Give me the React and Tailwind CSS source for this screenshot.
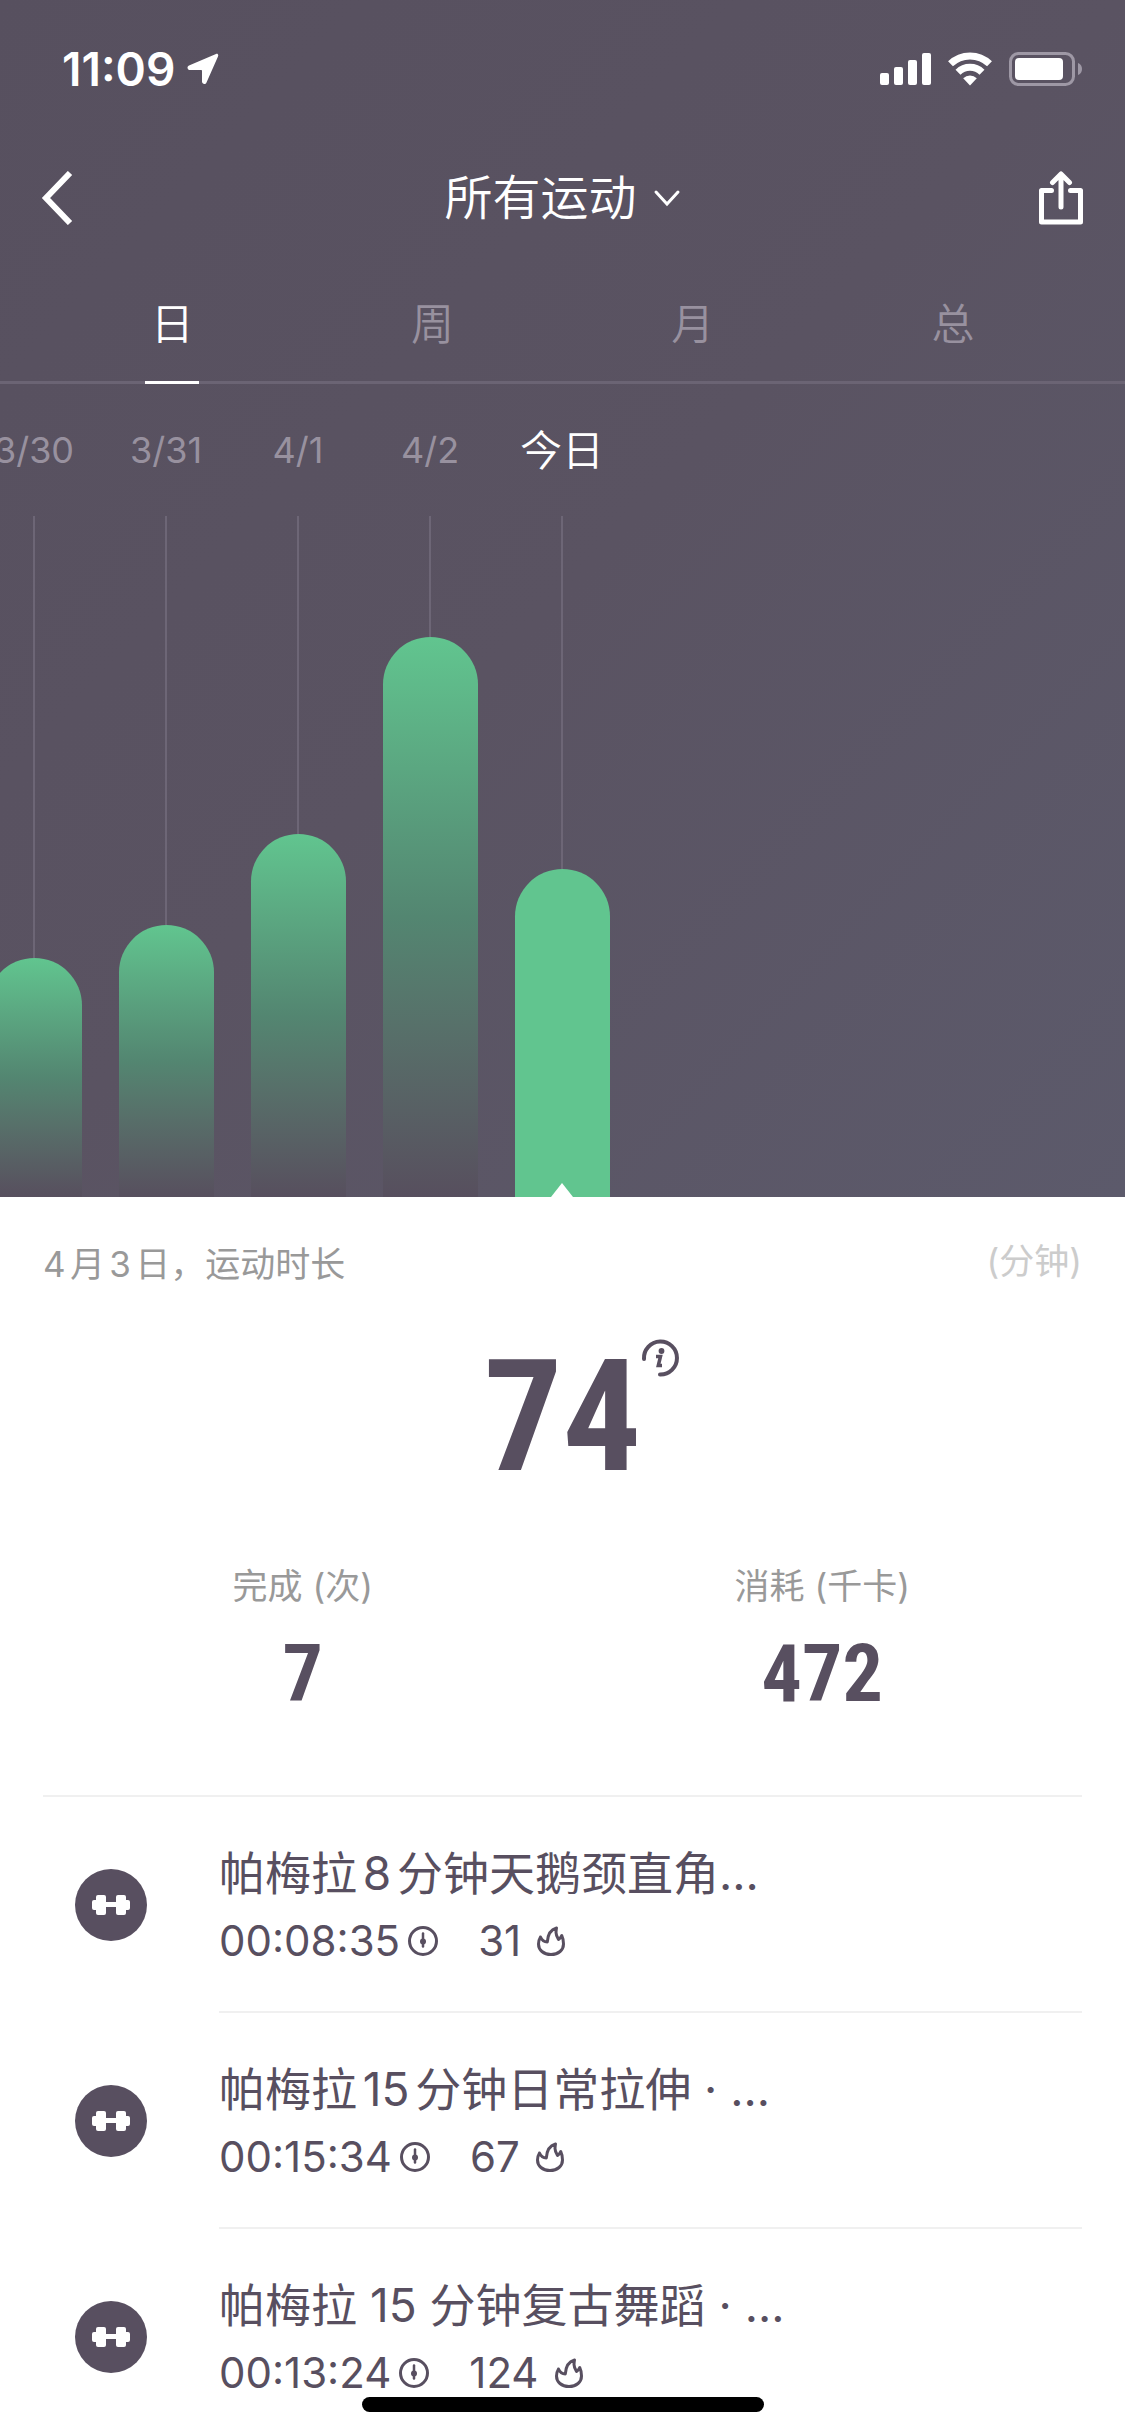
import React, { useState } from "react";

const TABS = ["日", "周", "月", "总"];

const DAYS = [
  { label: "3/30", height: 239 },
  { label: "3/31", height: 272 },
  { label: "4/1", height: 363 },
  { label: "4/2", height: 560 },
  { label: "今日", height: 328, today: true },
];

const WORKOUTS = [
  { id: 1, title: "帕梅拉8分钟天鹅颈直角…", time: "00:08:35", kcal: 31 },
  { id: 2, title: "帕梅拉15分钟日常拉伸 · …", time: "00:15:34", kcal: 67 },
  { id: 3, title: "帕梅拉 15 分钟复古舞蹈 · …", time: "00:13:24", kcal: 124 },
];

const LocationIcon = () => (
  <svg width="32" height="32" viewBox="0 0 32 32" fill="currentColor">
    <path d="M29 1 2 12.500c-2.400 1-1.800 4.500 1 4.500H14c.6 0 1 .4 1 1v10.500c0 2.800 3.500 3.400 4.500 1L31 3.500C31.800 1.500 30.500.3 29 1z" />
  </svg>
);

const SignalIcon = () => (
  <svg width="51" height="34" viewBox="0 0 51 34" fill="currentColor">
    <rect x="0" y="21" width="9" height="12" rx="2" />
    <rect x="14" y="15" width="9" height="18" rx="2" />
    <rect x="28" y="8" width="9" height="25" rx="2" />
    <rect x="42" y="1" width="9" height="32" rx="2" />
  </svg>
);

const WifiIcon = () => (
  <svg width="46" height="34" viewBox="0 0 46 34" fill="none" stroke="currentColor">
    <path d="M3.500 11.800a28 28 0 0 1 39 0" strokeWidth="7" />
    <path d="M11 20.200a17 17 0 0 1 24 0" strokeWidth="7" />
    <path d="M23 33.500 16.200 26.200a10 10 0 0 1 13.600 0z" fill="currentColor" stroke="none" />
  </svg>
);

const BatteryIcon = () => (
  <svg width="74" height="34" viewBox="0 0 74 34">
    <rect x="1.500" y="1.500" width="63" height="31" rx="8" fill="none" stroke="#9e98a5" strokeWidth="3" />
    <rect x="6" y="6" width="48" height="22" rx="4" fill="currentColor" />
    <path d="M69 11c3 1 4 3.500 4 6s-1 5-4 6z" fill="#9e98a5" />
  </svg>
);

const BackIcon = () => (
  <svg width="32" height="54" viewBox="0 0 32 54" fill="none" stroke="currentColor" strokeWidth="6">
    <path d="M29 2 5 27l24 25" />
  </svg>
);

const ChevronDownIcon = () => (
  <svg width="28" height="18" viewBox="0 0 28 18" fill="none" stroke="currentColor" strokeWidth="3" strokeLinecap="round">
    <path d="m3 3 11 12L25 3" />
  </svg>
);

const ShareIcon = () => (
  <svg
    width="46"
    height="54"
    viewBox="0 0 46 54"
    fill="none"
    stroke="currentColor"
    strokeWidth="5"
    strokeLinecap="round"
    strokeLinejoin="round"
  >
    <path d="M13.500 19.500H3.500V51h39V19.500h-10" />
    <path d="M23 36V4M14.500 11.500 23 3l8.500 8.500" />
  </svg>
);

const InfoIcon = () => (
  <svg width="38" height="38" viewBox="0 0 38 38" fill="none" stroke="currentColor">
    <path d="M3 20A16.500 16.500 0 1 1 19 35.500" strokeWidth="4" strokeLinecap="round" />
    <circle cx="20.500" cy="12" r="2.900" fill="currentColor" stroke="none" />
    <path d="M15 17.500h4.500L17.300 26.500h3.700" strokeWidth="3.500" />
  </svg>
);

const DumbbellIcon = () => (
  <svg width="38" height="20" viewBox="0 0 38 20" fill="currentColor">
    <rect x="0" y="5" width="8" height="10" rx="2" />
    <rect x="30" y="5" width="8" height="10" rx="2" />
    <rect x="12" y="7" width="14" height="5" />
    <rect x="4" y="0" width="10" height="20" rx="2" />
    <rect x="24" y="0" width="10" height="20" rx="2" />
  </svg>
);

const TimerIcon = () => (
  <svg width="30" height="30" viewBox="0 0 30 30" fill="none" stroke="currentColor">
    <circle cx="15" cy="15" r="13.500" strokeWidth="3" />
    <path d="M15 7.500v13" strokeWidth="2.500" strokeLinecap="round" />
    <circle cx="15" cy="15.500" r="3" fill="currentColor" stroke="none" />
  </svg>
);

const FlameIcon = () => (
  <svg
    width="28"
    height="30"
    viewBox="0 0 28 30"
    fill="none"
    stroke="currentColor"
    strokeWidth="3"
    strokeLinejoin="round"
    strokeLinecap="round"
  >
    <path d="M3.500 11C2.300 13 1.500 15.500 1.500 18 1.500 24 6.500 28.500 14 28.500S26.500 24 26.500 18c0-3-.6-6-1.800-8.500-.8 1.800-1.700 3-3.200 4-1.500-2.500-2.500-4.500-2.500-7 0-1.700.2-3 .5-4.500C14 3.500 10.800 8 10.300 16 7 16 5 14.500 3.500 11z" />
  </svg>
);

const StatusBar = () => (
  <div className="flex h-[138px] items-center justify-between pr-[42px] pl-[62px]">
    <div className="flex items-center gap-3">
      <span className="text-[46px] leading-none font-semibold">11:09</span>
      <LocationIcon />
    </div>
    <div className="flex items-center gap-4">
      <SignalIcon />
      <WifiIcon />
      <BatteryIcon />
    </div>
  </div>
);

const DayColumn = ({ day }) => (
  <button type="button" className="flex w-[132px] shrink-0 flex-col items-center">
    <span
      className={
        day.today
          ? "flex h-[132px] items-center text-[42px] font-[350] text-white"
          : "flex h-[132px] items-center text-[36px] text-[#98919f]"
      }
    >
      {day.label}
    </span>
    <span className="w-0.5 flex-1 bg-[#6d6676]" />
    <span
      className={
        day.today
          ? "relative w-[95px] rounded-t-full bg-[#61c58f]"
          : "w-[95px] rounded-t-full bg-linear-to-b from-[#61c58f] via-[#538671] to-[#574f5e]"
      }
      style={{ height: day.height }}
    >
      {day.today && (
        <svg
          className="absolute inset-x-0 bottom-0 mx-auto"
          width="22"
          height="14"
          viewBox="0 0 22 14"
          fill="#fff"
        >
          <path d="M11 0 22 14H0z" />
        </svg>
      )}
    </span>
  </button>
);

const Stat = ({ label, value }) => (
  <div className="flex flex-col items-center gap-[22px]">
    <span className="text-[35px] leading-[48px] text-[#999999]">{label}</span>
    <span className="font-['Roboto_Condensed','Liberation_Sans_Narrow','Roboto',sans-serif] text-[80px] leading-[84px] font-bold">
      {value}
    </span>
  </div>
);

const WorkoutRow = ({ workout }) => (
  <li>
    <a href="#workout" className="flex gap-[72px] pr-[43px] pl-[75px]">
      <span className="mt-[72px] flex size-[72px] shrink-0 items-center justify-center rounded-full bg-[#584f60] text-white">
        <DumbbellIcon />
      </span>
      <div className="flex h-[216px] min-w-0 flex-1 flex-col gap-2 border-b-2 border-[#f0f0f0] pt-[46px]">
        <p className="truncate text-[46px] leading-[60px] [text-autospace:normal]">{workout.title}</p>
        <div className="flex items-center text-[42px] leading-[60px]">
          <span>{workout.time}</span>
          <span className="ml-2">
            <TimerIcon />
          </span>
          <span className="ml-10">{workout.kcal}</span>
          <span className="ml-4">
            <FlameIcon />
          </span>
        </div>
      </div>
    </a>
  </li>
);

const App = () => {
  const [tab, setTab] = useState("日");

  return (
    <div
      lang="zh-CN"
      className="flex h-screen flex-col overflow-hidden bg-white font-['Inter','Noto_Sans_CJK_SC',sans-serif] text-[#584f60]"
    >
      <header className="shrink-0 bg-linear-to-br from-[#57505f] via-[#5a5362] to-[#5c5a6b] text-white">
        <StatusBar />

        <nav className="flex h-[120px] items-center justify-between px-[41px]">
          <button type="button" aria-label="返回" className="w-[46px]">
            <BackIcon />
          </button>
          <button type="button" className="flex items-center gap-4 text-[48px] font-[350]">
            所有运动
            <ChevronDownIcon />
          </button>
          <button type="button" aria-label="分享">
            <ShareIcon />
          </button>
        </nav>

        <div role="tablist" className="grid h-[126px] grid-cols-4 border-b-3 border-[#6b6474] px-[42px]">
          {TABS.map((name) => (
            <button
              key={name}
              type="button"
              role="tab"
              aria-selected={tab === name}
              onClick={() => setTab(name)}
              className={
                tab === name
                  ? "-mb-[3px] flex flex-col items-center justify-between pt-9 text-[43px] leading-[60px] font-[350] text-white"
                  : "-mb-[3px] flex flex-col items-center justify-between pt-9 text-[43px] leading-[60px] font-[350] text-[#98919f]"
              }
            >
              {name}
              {tab === name && <span className="h-[3px] w-[54px] bg-white" />}
            </button>
          ))}
        </div>

        {/* 每日运动柱状图 */}
        <div className="overflow-hidden">
          <div className="-ml-8 flex h-[813px]">
            {DAYS.map((day) => (
              <DayColumn key={day.label} day={day} />
            ))}
          </div>
        </div>
      </header>

      <main className="min-h-0 flex-1 overflow-hidden">
        <section className="px-[43px] pt-10 pb-[79px]">
          <div className="flex items-start justify-between text-[35px]">
            <h2 className="leading-[54px] text-[#999999] [text-autospace:normal]">4月3日，运动时长</h2>
            <span className="leading-[48px] text-[#cccccc]">(分钟)</span>
          </div>

          <div className="mt-[44px] flex justify-center">
            <div className="relative">
              <span className="block font-['Roboto_Condensed','Liberation_Sans_Narrow','Roboto',sans-serif] text-[156px] leading-[164px] font-bold">
                74
              </span>
              <button type="button" aria-label="说明" className="absolute top-1 left-full">
                <InfoIcon />
              </button>
            </div>
          </div>

          <div className="mt-[63px] grid grid-cols-2">
            <Stat label="完成 (次)" value="7" />
            <Stat label="消耗 (千卡)" value="472" />
          </div>
        </section>

        <div className="mx-[43px] border-t-2 border-[#f0f0f0]" />

        {/* 运动记录 */}
        <ul>
          {WORKOUTS.map((workout) => (
            <WorkoutRow key={workout.id} workout={workout} />
          ))}
        </ul>
      </main>

      <div className="fixed inset-x-0 bottom-6 mx-auto h-[15px] w-[402px] rounded-full bg-black" />
    </div>
  );
};

export default App;
